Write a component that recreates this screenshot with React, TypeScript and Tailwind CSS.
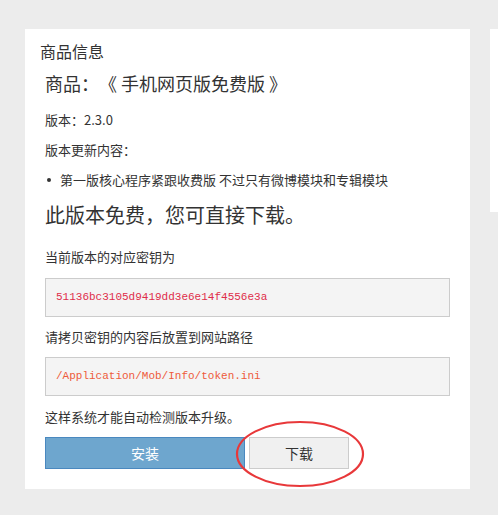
import React from "react";

const font = { fontFamily: '"Noto Sans CJK SC", "Noto Sans", sans-serif' };

function CodeBox({ text, color }: { text: string; color: string }) {
  return (
    <div className="flex h-[39px] items-center border border-[#cccccc] bg-[#f4f4f4] px-[10px]">
      <span className={`font-['Liberation_Mono',monospace] text-[11px] ${color}`}>{text}</span>
    </div>
  );
}

export default function App() {
  return (
    <div
      className="flex min-h-[515px] w-[498px] gap-[20px] overflow-hidden bg-[#ececec] pl-[25px] pt-[29px] text-[#333333] [text-spacing-trim:space-all]"
      style={font}
    >
      <div className="w-[445px] shrink-0 self-start bg-white pb-[20px] pl-[15px] pr-[20px] pt-[11px]">
        <h3 className="text-[16px] leading-[22px]">商品信息</h3>
        <div className="pl-[5px]">
          <h2 className="mt-[7px] text-[18px] leading-[28px]">商品：《 手机网页版免费版 》</h2>
          <p className="mt-[14px] text-[13px] leading-[18px]">版本：2.3.0</p>
          <p className="mt-[12px] text-[13px] leading-[18px]">版本更新内容：</p>
          <ul className="mt-[12px]">
            <li className="flex items-center gap-[9px] pl-[2px] text-[13px] leading-[18px]">
              <span className="h-[4px] w-[4px] rounded-full bg-[#333333]" />
              第一版核心程序紧跟收费版 不过只有微博模块和专辑模块
            </li>
          </ul>
          <h2 className="mt-[12px] text-[20px] leading-[28px]">此版本免费，您可直接下载。</h2>
          <p className="mt-[19px] text-[13px] leading-[18px]">当前版本的对应密钥为</p>
          <div className="mt-[12px]">
            <CodeBox text="51136bc3105d9419dd3e6e14f4556e3a" color="text-[#df2d4a]" />
          </div>
          <p className="mt-[10px] text-[13px] leading-[20px]">请拷贝密钥的内容后放置到网站路径</p>
          <div className="mt-[10px]">
            <CodeBox text="/Application/Mob/Info/token.ini" color="text-[#ee5b3b]" />
          </div>
          <p className="mt-[12px] text-[13px] leading-[18px]">这样系统才能自动检测版本升级。</p>
          <div className="relative mt-[11px] flex gap-[4px]">
            <button className="flex h-[32px] w-[200px] items-center justify-center border border-[#4a88bf] bg-[#6ea6ce] text-[14px] text-white">
              安装
            </button>
            <button className="flex h-[32px] w-[100px] items-center justify-center border border-[#cccccc] bg-[#f0f0f0] text-[14px] text-[#333333]">
              下载
            </button>
            <svg className="pointer-events-none absolute left-[189px] top-[-18px]" width="132" height="72" viewBox="0 0 132 72">
              <ellipse cx="66" cy="35" rx="63" ry="32" fill="none" stroke="#e8383a" strokeWidth="2.2" />
            </svg>
          </div>
        </div>
      </div>
      <div className="h-[183px] w-[40px] shrink-0 bg-white" />
    </div>
  );
}
